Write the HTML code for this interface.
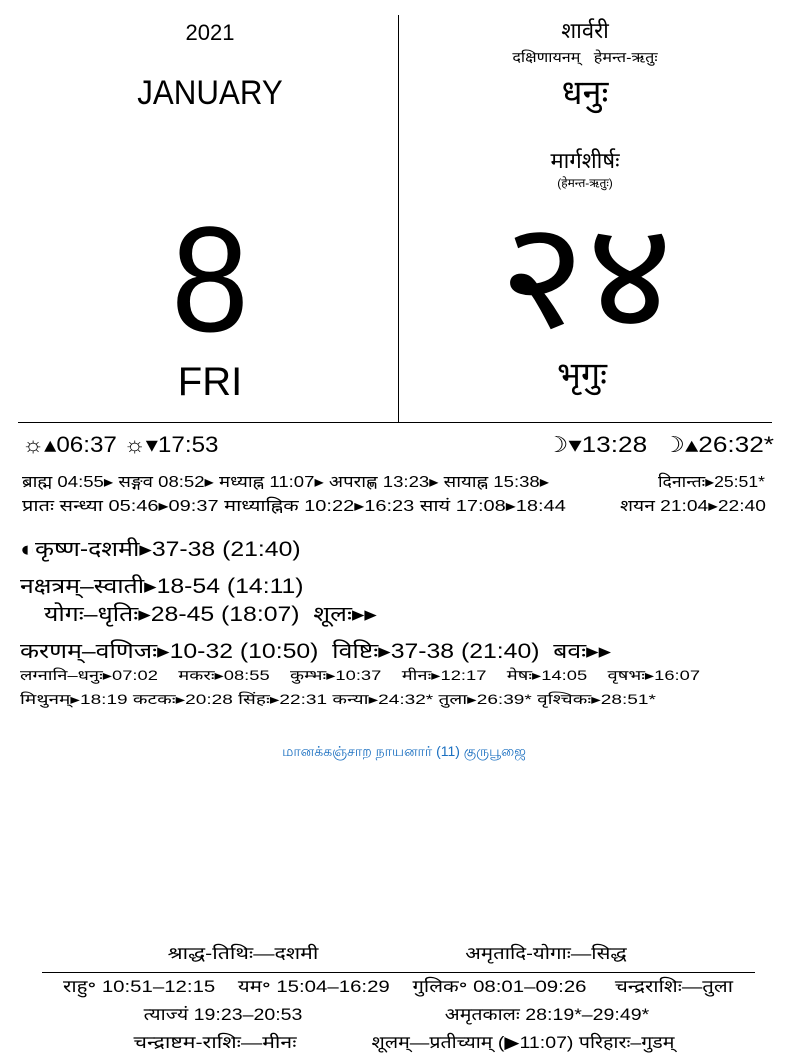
<!DOCTYPE html>
<html><head><meta charset="utf-8"><style>
body{margin:0;width:798px;height:1063px;background:#fff;position:relative;font-family:"Liberation Sans",sans-serif;color:#000;overflow:hidden}
.a{position:absolute;white-space:nowrap;line-height:1;transform-origin:left center}
.c{transform-origin:center center}
</style></head><body>
<div style="position:absolute;left:398px;top:15px;width:1px;height:407px;background:#000"></div>
<div style="position:absolute;left:18px;top:422px;width:754px;height:1px;background:#000"></div>
<div style="position:absolute;left:42px;top:972px;width:713px;height:1px;background:#000"></div>

<div class="a c" style="left:210px;top:22px;font-size:22px;transform:translateX(-50%)">2021</div>
<div class="a c" style="left:210px;top:76px;font-size:34px;transform:translateX(-50%) scaleX(0.92)">JANUARY</div>
<div class="a c" style="left:210px;top:204px;font-size:150px;transform:translateX(-50%) scaleX(0.93)">8</div>
<div class="a c" style="left:210px;top:362px;font-size:40px;transform:translateX(-50%)">FRI</div>

<div class="a c" style="left:585px;top:20px;font-size:22px;transform:translateX(-50%)">शार्वरी</div>
<div class="a c" style="left:585px;top:50px;font-size:14px;transform:translateX(-50%) scaleX(1.15)">दक्षिणायनम्&nbsp;&nbsp;&nbsp;हेमन्त-ऋतुः</div>
<div class="a c" style="left:585px;top:76px;font-size:34px;transform:translateX(-50%)">धनुः</div>
<div class="a c" style="left:585px;top:150px;font-size:22px;transform:translateX(-50%)">मार्गशीर्षः</div>
<div class="a c" style="left:585px;top:177px;font-size:12px;transform:translateX(-50%)">(हेमन्त-ऋतुः)</div>
<div class="a c" style="left:586px;top:200px;font-size:150px;transform:translateX(-50%) scaleX(1.12)">२४</div>
<div class="a c" style="left:582px;top:358px;font-size:34px;transform:translateX(-50%)">भृगुः</div>

<div class="a" style="left:22px;top:434px;font-size:22px;transform:scaleX(1.1)">☼▴06:37 ☼▾17:53</div>
<div class="a" style="left:545px;top:434px;font-size:22px;transform:scaleX(1.19)">☽▾13:28 &nbsp;☽▴26:32*</div>
<div class="a" style="left:22px;top:475px;font-size:16px;transform:scaleX(1.16)">ब्राह्म 04:55▸ सङ्गव 08:52▸ मध्याह्न 11:07▸ अपराह्ण 13:23▸ सायाह्न 15:38▸</div>
<div class="a" style="left:658px;top:475px;font-size:16px;transform:scaleX(1.1)">दिनान्तः▸25:51*</div>
<div class="a" style="left:22px;top:499px;font-size:16px;transform:scaleX(1.25)">प्रातः सन्ध्या 05:46▸09:37 माध्याह्निक 10:22▸16:23 सायं 17:08▸18:44</div>
<div class="a" style="left:620px;top:499px;font-size:16px;transform:scaleX(1.2)">शयन 21:04▸22:40</div>

<div class="a" style="left:20px;top:539px;font-size:21px;transform:scaleX(1.18)">◐कृष्ण-दशमी▸37-38 (21:40)</div>
<div class="a" style="left:20px;top:576px;font-size:21px;transform:scaleX(1.18)">नक्षत्रम्–स्वाती▸18-54 (14:11)</div>
<div class="a" style="left:44px;top:604px;font-size:21px;transform:scaleX(1.18)">योगः–धृतिः▸28-45 (18:07)&nbsp; शूलः▸▸</div>
<div class="a" style="left:20px;top:641px;font-size:21px;transform:scaleX(1.18)">करणम्–वणिजः▸10-32 (10:50)&nbsp; विष्टिः▸37-38 (21:40)&nbsp; बवः▸▸</div>
<div class="a" style="left:20px;top:668px;font-size:14px;transform:scaleX(1.31)">लग्नानि–धनुः▸07:02 &nbsp;&nbsp; मकरः▸08:55 &nbsp;&nbsp; कुम्भः▸10:37 &nbsp;&nbsp; मीनः▸12:17 &nbsp;&nbsp; मेषः▸14:05 &nbsp;&nbsp; वृषभः▸16:07</div>
<div class="a" style="left:20px;top:692px;font-size:14px;transform:scaleX(1.36)">मिथुनम्▸18:19 कटकः▸20:28 सिंहः▸22:31 कन्या▸24:32* तुला▸26:39* वृश्चिकः▸28:51*</div>

<div class="a c" style="left:404px;top:744px;font-size:14px;color:#1a6fc0;transform:translateX(-50%)">மானக்கஞ்சாற நாயனார் (11) குருபூஜை</div>

<div class="a c" style="left:243px;top:945px;font-size:17px;transform:translateX(-50%) scaleX(1.25)">श्राद्ध-तिथिः—दशमी</div>
<div class="a c" style="left:546px;top:945px;font-size:17px;transform:translateX(-50%) scaleX(1.2)">अमृतादि-योगाः—सिद्ध</div>
<div class="a c" style="left:398px;top:978px;font-size:17px;transform:translateX(-50%) scaleX(1.2)">राहु॰ 10:51–12:15 &nbsp;&nbsp; यम॰ 15:04–16:29 &nbsp;&nbsp; गुलिक॰ 08:01–09:26 &nbsp;&nbsp;&nbsp; चन्द्रराशिः—तुला</div>
<div class="a c" style="left:223px;top:1006px;font-size:17px;transform:translateX(-50%) scaleX(1.15)">त्याज्यं 19:23–20:53</div>
<div class="a c" style="left:547px;top:1006px;font-size:17px;transform:translateX(-50%) scaleX(1.15)">अमृतकालः 28:19*–29:49*</div>
<div class="a c" style="left:215px;top:1034px;font-size:17px;transform:translateX(-50%) scaleX(1.25)">चन्द्राष्टम-राशिः—मीनः</div>
<div class="a c" style="left:523px;top:1034px;font-size:17px;transform:translateX(-50%) scaleX(1.15)">शूलम्—प्रतीच्याम् (▶11:07) परिहारः–गुडम्</div>
</body></html>
